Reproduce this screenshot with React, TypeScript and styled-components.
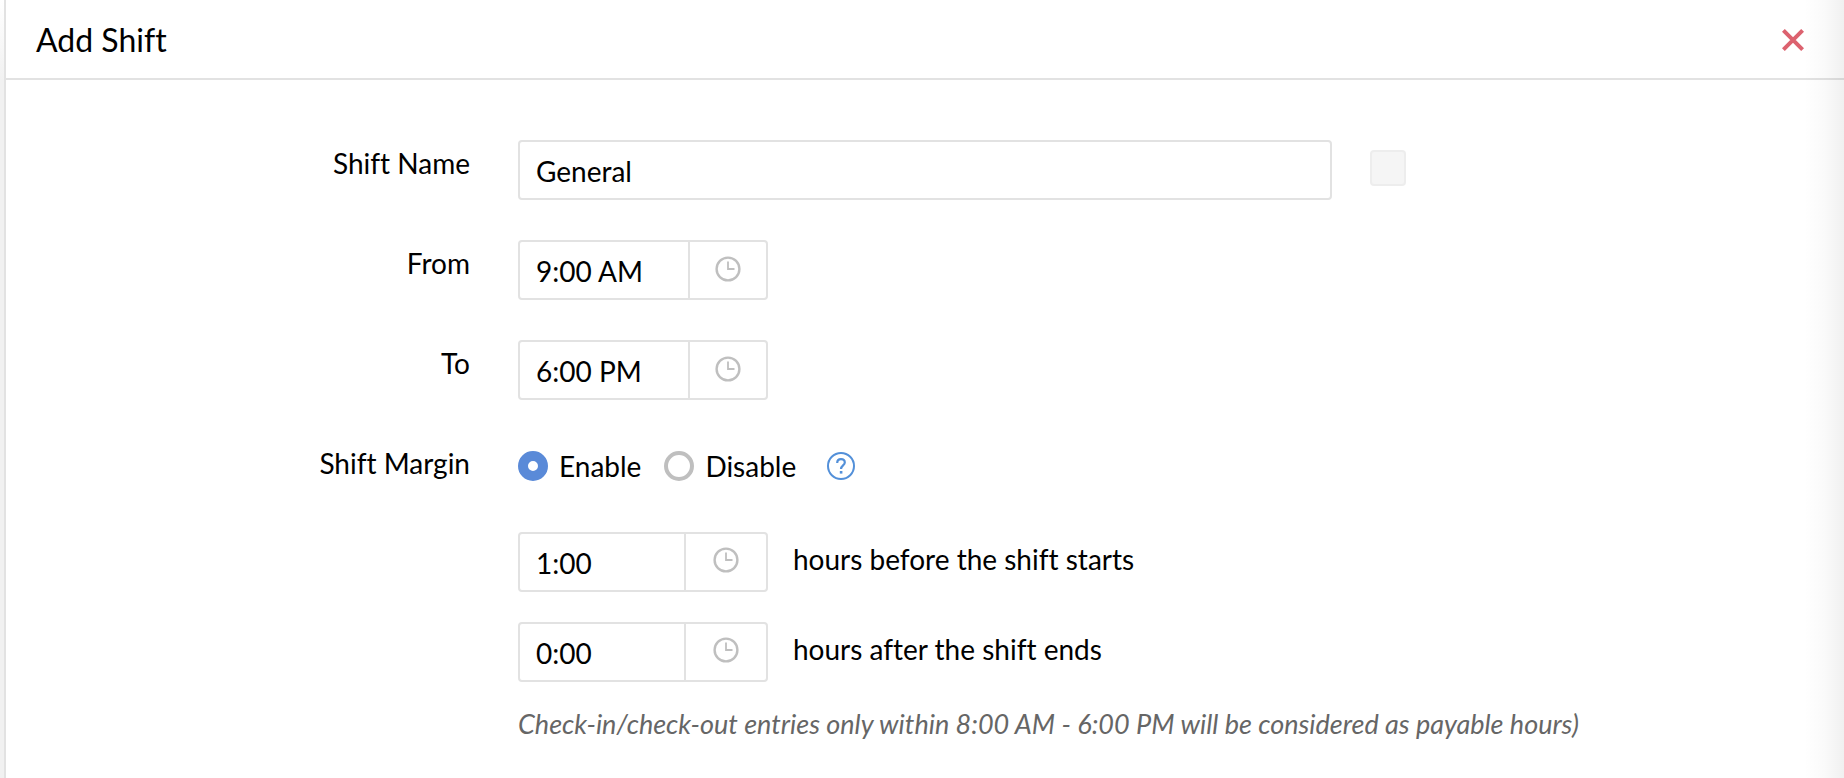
import React, { useState } from "react";
import styled, { createGlobalStyle } from "styled-components";

const line = "#e2e2e2";

const GlobalStyle = createGlobalStyle`
  * { box-sizing: border-box; }
  body {
    margin: 0;
    background: #f1f1f1;
    color: #000;
    font-family: Lato, "Liberation Sans", sans-serif;
    font-size: 28px;
    line-height: 34px;
    font-variant-ligatures: none;
  }
  input, button { font: inherit; color: inherit; }
`;

const Page = styled.div`
  min-height: 100vh;
  padding-left: 4px;
  display: flex;
  background: linear-gradient(to bottom, #fff, #f1f1f1 80px);
`;

const Panel = styled.main`
  position: relative;
  flex: 1;
  min-width: 0;
  border-left: 2px solid ${line};
  background: #fff;
`;

const EdgeShade = styled.div`
  position: absolute;
  inset: 0 0 0 auto;
  width: 40px;
  background: linear-gradient(to right, rgba(0, 0, 0, 0), rgba(0, 0, 0, 0.02) 50%, rgba(0, 0, 0, 0.06));
  pointer-events: none;
`;

const Header = styled.header`
  display: flex;
  align-items: center;
  justify-content: space-between;
  height: 80px;
  padding: 2px 40px 0 30px;
  border-bottom: 2px solid ${line};
`;

const Title = styled.h1`
  margin: 0;
  font-size: 32px;
  line-height: 40px;
  font-weight: 400;
`;

const CloseButton = styled.button`
  display: flex;
  padding: 0;
  border: 0;
  background: none;
  color: #dc626f;
  cursor: pointer;
`;

const Form = styled.form`
  display: flex;
  flex-direction: column;
  gap: 40px;
  padding-top: 60px;
`;

const Row = styled.div`
  display: grid;
  grid-template-columns: minmax(0, 464fr) minmax(0, 1326fr);
  column-gap: 48px;
  min-height: 52px;
`;

const Label = styled.label`
  padding-top: 6px;
  text-align: right;
`;

const Controls = styled.div`
  display: flex;
  align-items: center;
  min-width: 0;
`;

const TextInput = styled.input`
  flex: 0 1 814px;
  min-width: 0;
  height: 60px;
  padding: 2px 16px 0;
  border: 2px solid ${line};
  border-radius: 4px;
  background: #fff;
  outline: 0;
`;

const Swatch = styled.button`
  width: 36px;
  height: 36px;
  margin: 0 0 4px 38px;
  border: 2px solid #ededed;
  border-radius: 4px;
  background: #f5f5f5;
`;

const TimeField = styled.div`
  display: flex;
  width: 250px;
  height: 60px;
  border: 2px solid ${line};
  border-radius: 4px;
`;

const TimeInput = styled.input`
  flex: 1;
  min-width: 0;
  padding: 2px 0 0 16px;
  border: 0;
  background: none;
  outline: 0;
`;

const ClockButton = styled.button<{ $wide?: boolean }>`
  display: flex;
  align-items: center;
  justify-content: center;
  width: ${(p) => (p.$wide ? 82 : 78)}px;
  padding: 0 1px ${(p) => (p.$wide ? 4 : 2)}px 0;
  border: 0;
  border-left: 2px solid ${line};
  background: none;
  color: #bfbfbf;
  cursor: pointer;
`;

const RadioRow = styled(Controls)`
  height: 36px;
  margin-top: 8px;
`;

const RadioOption = styled.label`
  display: flex;
  align-items: center;
  gap: 11px;
  margin-right: 23px;
`;

const Radio = styled.input`
  appearance: none;
  width: 30px;
  height: 30px;
  margin: 0;
  border: 4px solid #bfbfbf;
  border-radius: 50%;
  background: #fff;

  &:checked {
    border: 10px solid #5a8ad8;
  }
`;

const HelpButton = styled.button`
  display: flex;
  margin-left: 8px;
  padding: 0;
  border: 0;
  background: none;
  color: #5390d9;
  cursor: pointer;
`;

const Margins = styled.div`
  grid-column: 2;
  display: flex;
  flex-direction: column;
  gap: 30px;
`;

const MarginRow = styled.div`
  display: flex;
  align-items: center;
  gap: 25px;
`;

const MarginText = styled.label`
  padding-bottom: 6px;
`;

const Hint = styled.p`
  margin: -5px 0 0;
  color: #666;
  font-size: 27px;
  font-style: italic;
`;

const ClockIcon = () => (
  <svg width="26" height="26" viewBox="0 0 26 26" fill="none" stroke="currentColor" aria-hidden="true">
    <circle cx="13" cy="13" r="11.4" strokeWidth="2.4" />
    <path d="M13 5.5V13h6.5" strokeWidth="1.8" />
  </svg>
);

interface TimeProps {
  id: string;
  initial: string;
  wide?: boolean;
}

function TimePicker({ id, initial, wide }: TimeProps) {
  const [value, setValue] = useState(initial);
  return (
    <TimeField>
      <TimeInput id={id} value={value} onChange={(e) => setValue(e.target.value)} />
      <ClockButton type="button" aria-label="Pick a time" $wide={wide}>
        <ClockIcon />
      </ClockButton>
    </TimeField>
  );
}

export default function App() {
  return (
    <Page>
      <GlobalStyle />
      <Panel>
        <Header>
          <Title>Add Shift</Title>
          <CloseButton type="button" aria-label="Close">
            <svg width="22" height="22" viewBox="0 0 22 22" stroke="currentColor" strokeWidth="4" aria-hidden="true">
              <path d="M1.4 1.4l19.2 19.2M20.6 1.4L1.4 20.6" />
            </svg>
          </CloseButton>
        </Header>
        <Form>
          <Row>
            <Label htmlFor="name">Shift Name</Label>
            <Controls>
              <TextInput id="name" type="text" defaultValue="General" />
              <Swatch type="button" aria-label="Shift colour" />
            </Controls>
          </Row>
          <Row>
            <Label htmlFor="from">From</Label>
            <TimePicker id="from" initial="9:00 AM" />
          </Row>
          <Row>
            <Label htmlFor="to">To</Label>
            <TimePicker id="to" initial="6:00 PM" />
          </Row>
          <Row role="radiogroup" aria-labelledby="margin-label">
            <Label as="span" id="margin-label">Shift Margin</Label>
            <RadioRow>
              <RadioOption>
                <Radio type="radio" name="margin" defaultChecked />
                Enable
              </RadioOption>
              <RadioOption>
                <Radio type="radio" name="margin" />
                Disable
              </RadioOption>
              <HelpButton type="button" aria-label="Help">
                <svg width="28" height="28" viewBox="0 0 28 28" fill="none" stroke="currentColor" aria-hidden="true">
                  <circle cx="14" cy="14" r="13" strokeWidth="2" />
                  <path d="M10.2 11c0-2.3 1.5-3.8 3.8-3.8s3.8 1.3 3.8 3.4c0 2.7-3.8 3-3.8 6.4" strokeWidth="2.2" />
                  <path d="M12.8 19h2.6v2.6h-2.6z" fill="currentColor" stroke="none" />
                </svg>
              </HelpButton>
            </RadioRow>
          </Row>
          <Row>
            <Margins>
              <MarginRow>
                <TimePicker id="before" initial="1:00" wide />
                <MarginText htmlFor="before">hours before the shift starts</MarginText>
              </MarginRow>
              <MarginRow>
                <TimePicker id="after" initial="0:00" wide />
                <MarginText htmlFor="after">hours after the shift ends</MarginText>
              </MarginRow>
              <Hint>Check-in/check-out entries only within 8:00 AM - 6:00 PM will be considered as payable hours)</Hint>
            </Margins>
          </Row>
        </Form>
        <EdgeShade />
      </Panel>
    </Page>
  );
}
